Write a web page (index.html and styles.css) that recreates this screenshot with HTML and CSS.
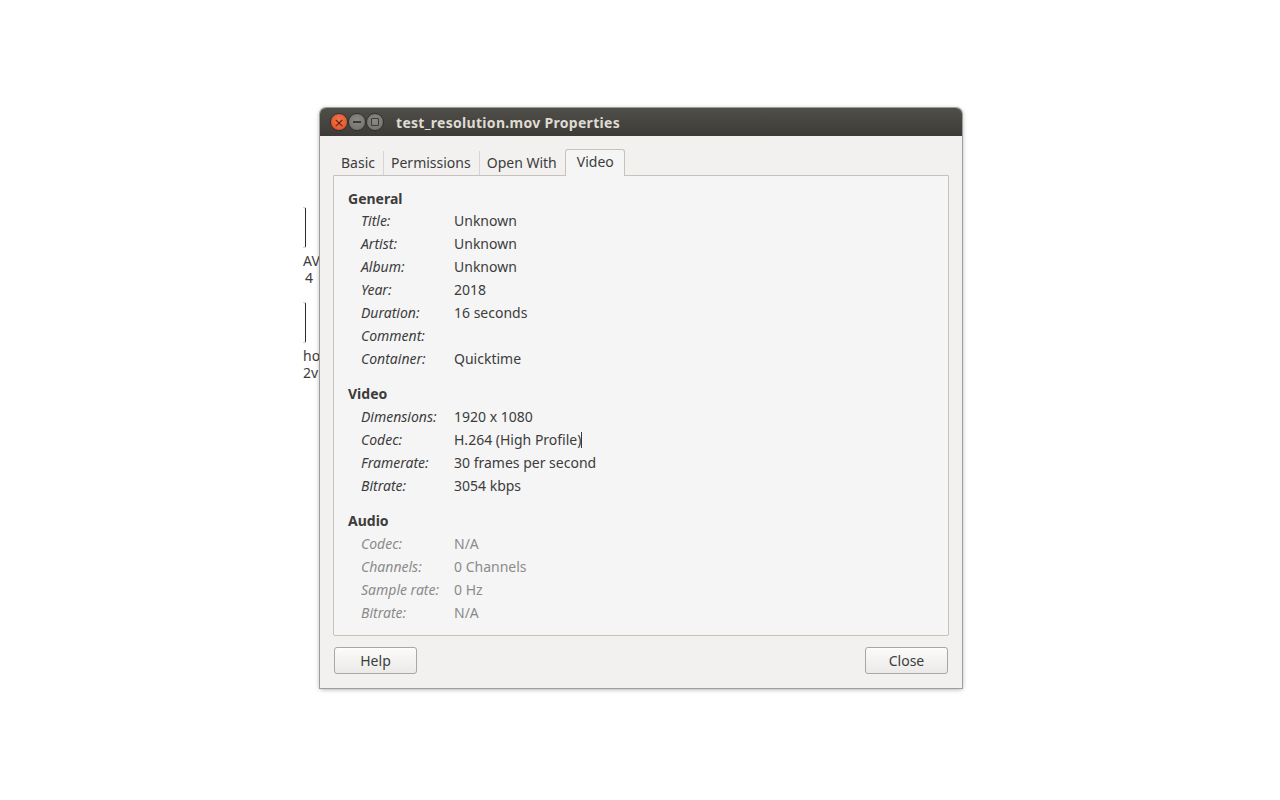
FILE: index.html
```html
<!DOCTYPE html>
<html lang="en">
<head>
    <meta charset="UTF-8">
    <title>test_resolution.mov Properties</title>
    <link rel="stylesheet" href="styles.css">
</head>
<body>

<div class="desktop">
    <!-- desktop icons, mostly covered by the window -->
    <div class="desk-icon icon-one">
        <div class="thumb"></div>
        <div class="label">AV<br><span class="second">4</span></div>
    </div>
    <div class="desk-icon icon-two">
        <div class="thumb"></div>
        <div class="label">ho<br>2v</div>
    </div>

    <div class="window">
        <div class="titlebar">
            <div class="controls">
                <span class="ctl close">&#215;</span>
                <span class="ctl min"><i class="dash"></i></span>
                <span class="ctl max"><i class="square"></i></span>
            </div>
            <div class="title">test_resolution.mov Properties</div>
        </div>

        <div class="body">
            <div class="tabs">
                <div class="tab">Basic</div>
                <div class="tab">Permissions</div>
                <div class="tab">Open With</div>
                <div class="tab active">Video</div>
            </div>

            <div class="page">
                <h3>General</h3>
                <div class="grid first">
                    <span class="key">Title:</span><span>Unknown</span>
                    <span class="key">Artist:</span><span>Unknown</span>
                    <span class="key">Album:</span><span>Unknown</span>
                    <span class="key">Year:</span><span>2018</span>
                    <span class="key">Duration:</span><span>16 seconds</span>
                    <span class="key">Comment:</span><span></span>
                    <span class="key">Container:</span><span>Quicktime</span>
                </div>

                <h3>Video</h3>
                <div class="grid">
                    <span class="key">Dimensions:</span><span>1920 x 1080</span>
                    <span class="key">Codec:</span><span>H.264 (High Profile)<i class="caret"></i></span>
                    <span class="key">Framerate:</span><span>30 frames per second</span>
                    <span class="key">Bitrate:</span><span>3054 kbps</span>
                </div>

                <h3>Audio</h3>
                <div class="grid dim">
                    <span class="key">Codec:</span><span>N/A</span>
                    <span class="key">Channels:</span><span>0 Channels</span>
                    <span class="key">Sample rate:</span><span>0 Hz</span>
                    <span class="key">Bitrate:</span><span>N/A</span>
                </div>
            </div>

            <div class="buttons">
                <button>Help</button>
                <button>Close</button>
            </div>
        </div>
    </div>
</div>

</body>
</html>
```

FILE: styles.css
```css
body {
    margin: 0;
    padding: 0;
    background: #ffffff;
    font-family: "Noto Sans", "DejaVu Sans", sans-serif;
    font-size: 14px;
    color: #3c3c3c;
}
.desktop {
    position: relative;
    width: 1280px;
    height: 800px;
    overflow: hidden;
}

/* only a sliver of each icon shows left of the window */
.desk-icon {
    position: absolute;
    left: 303px;
    width: 17px;
    overflow: hidden;
}
.icon-one { top: 207px; }
.icon-two { top: 302px; }
.thumb {
    width: 2px;
    height: 39px;
    border: 1px solid #d4d4d4;
    border-left: none;
    border-right: 1.5px solid #2a2a2a;
    border-radius: 0 2px 2px 0;
}
.label {
    font-size: 14px;
    line-height: 17px;
    color: #3c3c3c;
    margin-top: 4px;
    white-space: nowrap;
}
.second { padding-left: 2px; }

.window {
    position: absolute;
    left: 320px;
    top: 108px;
    width: 642px;
    background: #f2f1f0;
    border-radius: 6px 6px 0 0;
    box-shadow: 0 0 0 1px #a09e99, 0 1px 5px rgba(0, 0, 0, 0.4);
}
.titlebar {
    height: 28px;
    background: linear-gradient(#504e49, #3c3b37);
    border-radius: 6px 6px 0 0;
    display: flex;
    align-items: center;
    padding-left: 10px;
}
.controls {
    display: flex;
    width: 66px;
}
.ctl {
    width: 16px;
    height: 16px;
    border-radius: 50%;
    display: flex;
    align-items: center;
    justify-content: center;
    background: radial-gradient(circle at 50% 40%, #8d8b85, #6e6c67);
    border: 1px solid #33322f;
}
.ctl.close {
    background: radial-gradient(circle at 50% 40%, #f4774f, #df4b1d);
    color: #5a1e0b;
    font-size: 13px;
    line-height: 1;
    font-family: "DejaVu Sans", sans-serif;
}
.dash {
    width: 8px;
    height: 2px;
    background: #3c3b37;
}
.square {
    width: 6px;
    height: 6px;
    border: 1.5px solid #3c3b37;
    border-radius: 1px;
}
.title {
    color: #dfdbd2;
    font-weight: bold;
    font-size: 14px;
    letter-spacing: 0.3px;
    padding-top: 1px;
}

.body {
    padding: 12px 13px 14px 13px;
}
.tabs {
    display: flex;
    align-items: flex-end;
    height: 27px;
    padding-left: 1px;
}
.tab {
    height: 24px;
    line-height: 24px;
    padding: 0 8px 0 7px;
    color: #3c3c3c;
    border-left: 1px solid #d8d5cf;
}
.tab:first-child { border-left: none; }
.tab.active {
    height: 26px;
    line-height: 24px;
    padding: 0 10px 0 11px;
    background: #f5f5f5;
    border: 1px solid #c6c2bb;
    border-bottom: none;
    border-radius: 3px 3px 0 0;
    margin-bottom: -1px;
    position: relative;
    z-index: 1;
}
.page {
    box-sizing: border-box;
    height: 461px;
    background: #f5f5f5;
    border: 1px solid #c6c2bb;
    border-radius: 0 0 2px 2px;
    padding: 11px 14px 0 14px;
}
.page h3 {
    margin: 0;
    font-size: 14px;
    line-height: 23px;
    font-weight: bold;
}
.grid {
    display: grid;
    grid-template-columns: 93px auto;
    margin-left: 13px;
    margin-bottom: 12px;
    line-height: 23px;
}
.grid.first { margin-top: -1px; }
.key { font-style: italic; }
.grid.dim { color: #8b8b8b; }
.caret {
    display: inline-block;
    width: 1px;
    height: 16px;
    background: #3c3c3c;
    vertical-align: -3px;
}

.buttons {
    display: flex;
    justify-content: space-between;
    margin-top: 11px;
    padding: 0 1px;
}
.buttons button {
    width: 83px;
    height: 27px;
    font-family: inherit;
    font-size: 14px;
    color: #3c3c3c;
    background: linear-gradient(#fbfbfa, #ebeae8);
    border: 1px solid #aaa6a0;
    border-radius: 3px;
    box-shadow: 0 1px 0 rgba(255, 255, 255, 0.8) inset;
}
```
